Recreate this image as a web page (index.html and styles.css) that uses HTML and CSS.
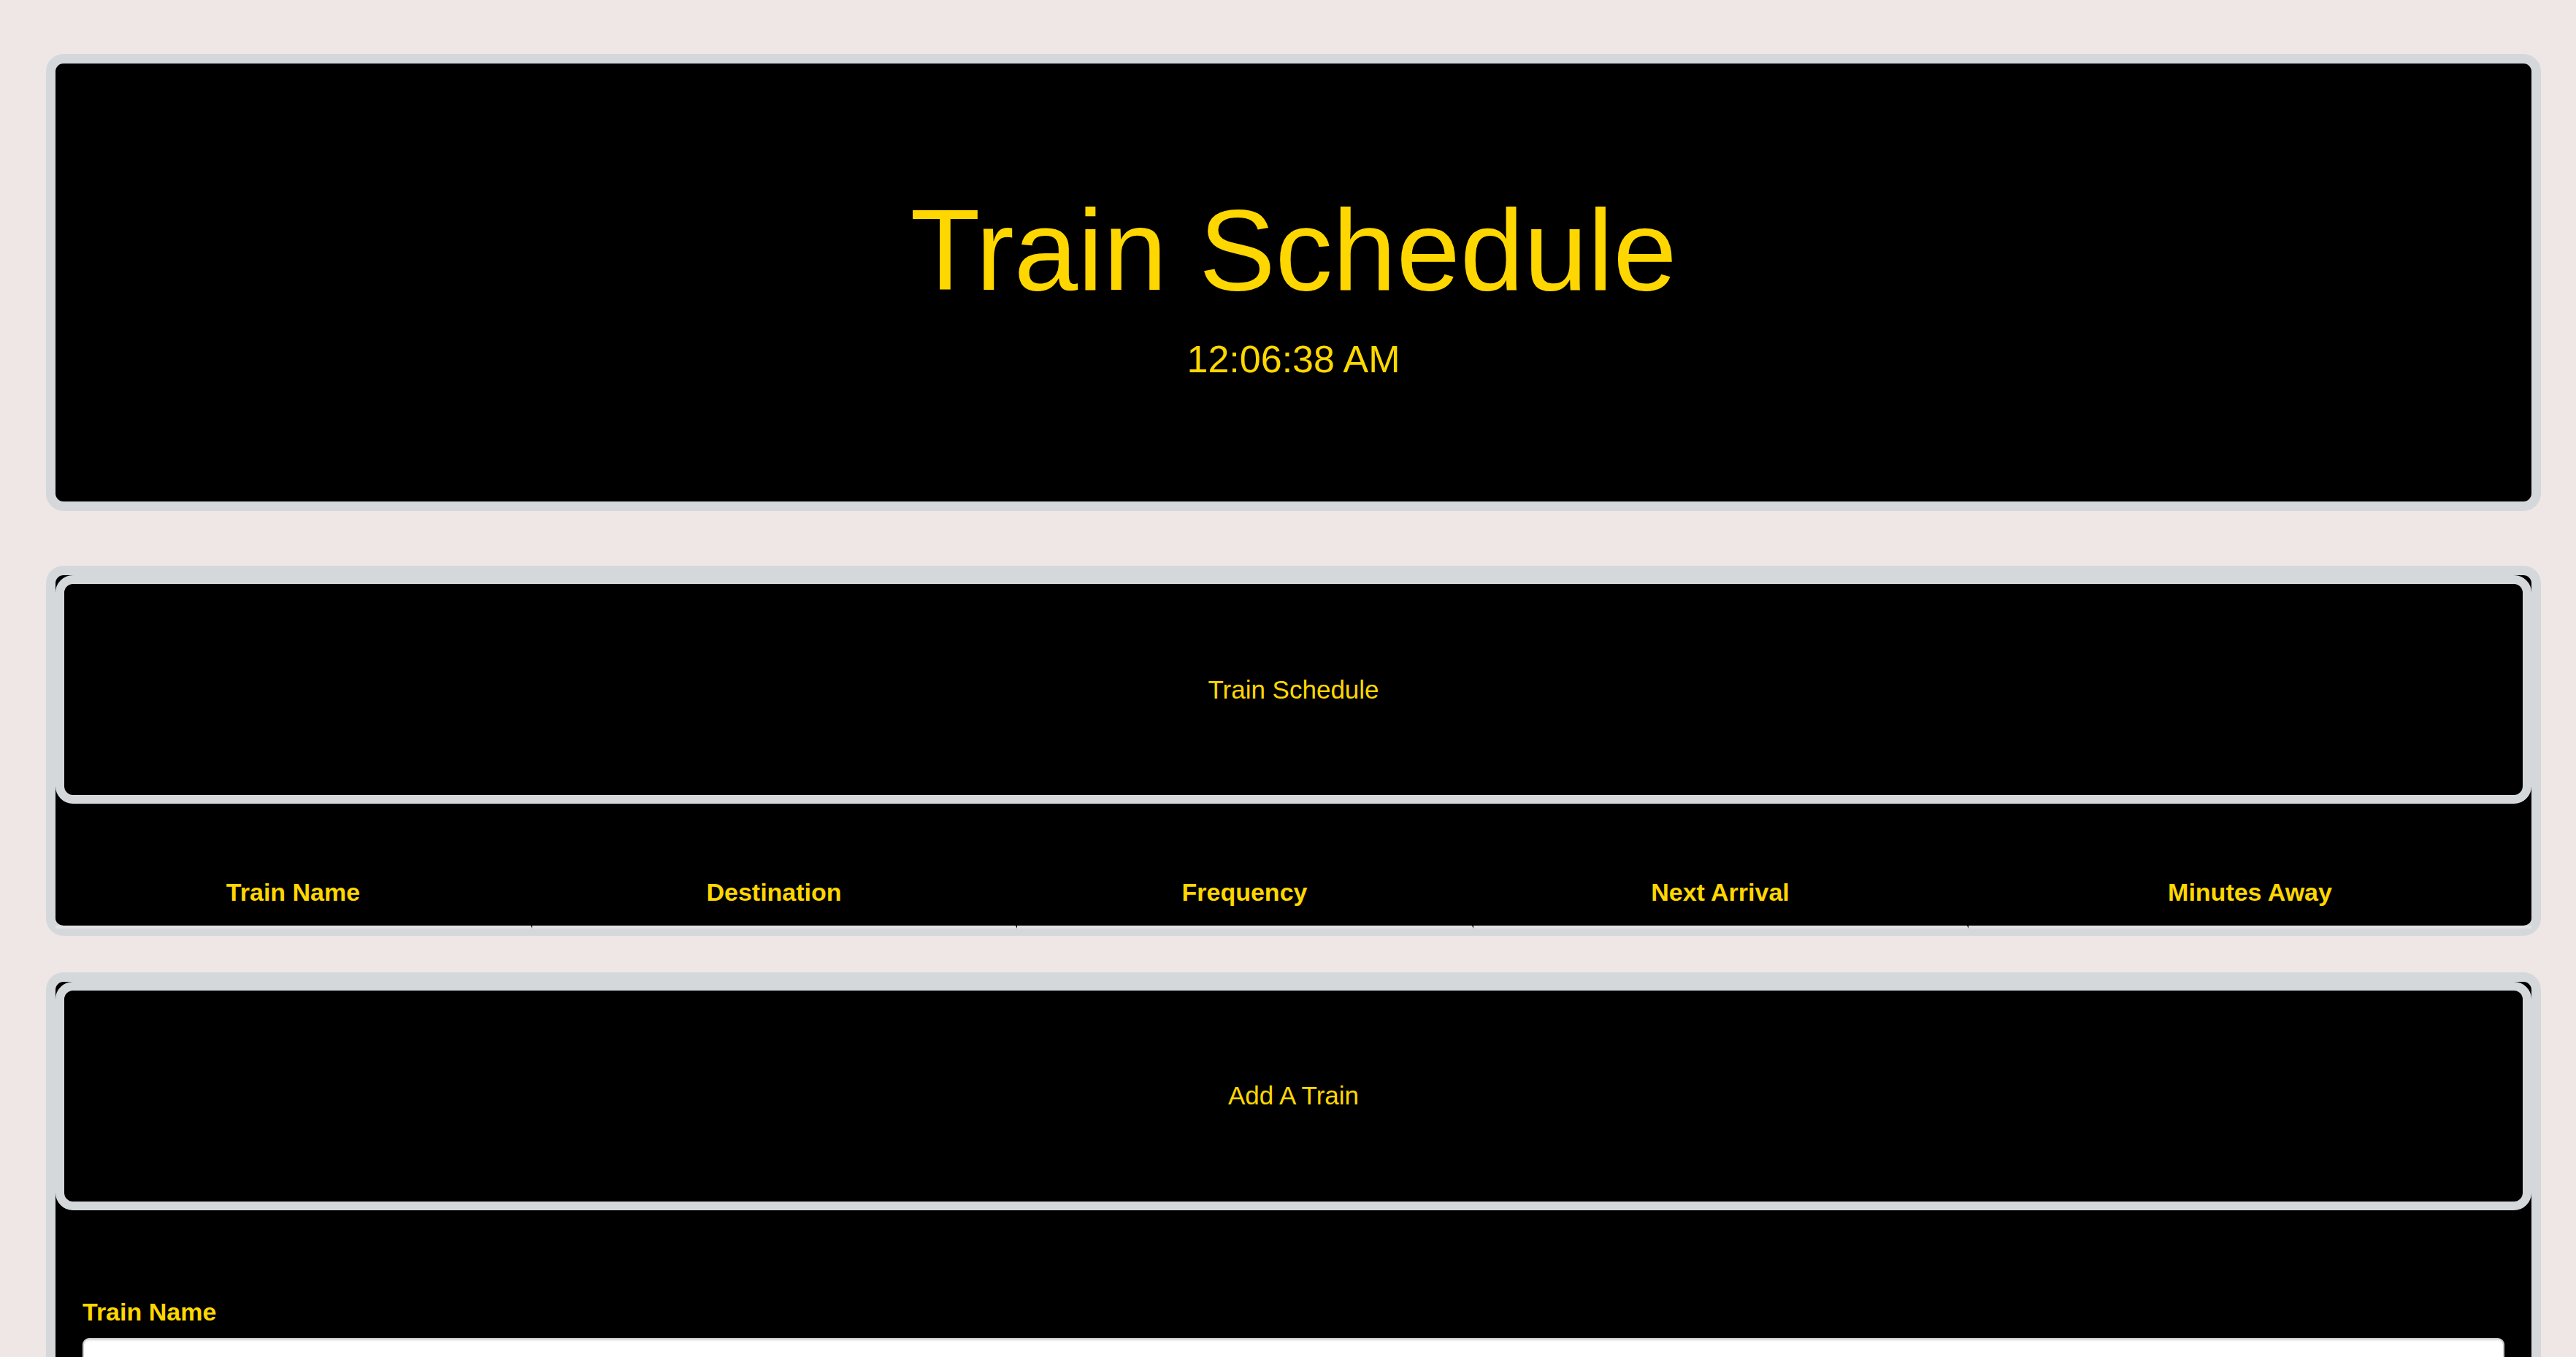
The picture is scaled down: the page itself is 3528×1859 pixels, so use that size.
FILE: index.html
```html
<!DOCTYPE html>
<html lang="en">
<head>
<meta charset="utf-8">
<title>Train Schedule</title>
<link rel="stylesheet" href="styles.css">
</head>
<body>
<div class="container">
  <header class="jumbotron">
    <h1 class="title">Train Schedule</h1>
    <div class="clock">12:06:38 AM</div>
  </header>

  <section class="panel panel-schedule">
    <div class="panel-heading">Train Schedule</div>
    <table class="schedule">
      <colgroup>
        <col class="c1"><col class="c2"><col class="c3"><col class="c4"><col class="c5">
      </colgroup>
      <thead>
        <tr>
          <th>Train Name</th>
          <th>Destination</th>
          <th>Frequency</th>
          <th>Next Arrival</th>
          <th class="last">Minutes Away</th>
        </tr>
      </thead>
      <tbody></tbody>
    </table>
  </section>

  <section class="panel panel-add">
    <div class="panel-heading">Add A Train</div>
    <form class="panel-body">
      <label class="field-label" for="train-name">Train Name</label>
      <input class="field-input" id="train-name" type="text">
    </form>
  </section>
</div>
</body>
</html>
```

FILE: styles.css
```css
html, body {
  margin: 0;
  padding: 0;
}

body {
  background: #efe6e6;
  font-family: "Liberation Sans", Arial, sans-serif;
  color: #ffd700;
}

.container {
  padding: 74px 48px 0 63px;
}

.jumbotron {
  background: #000;
  border: 13px solid #d5d8db;
  border-radius: 24px;
  padding: 170px 0 164px;
  margin-bottom: 75px;
  text-align: center;
}

.title {
  margin: 0;
  font-size: 157px;
  font-weight: normal;
  line-height: 1.1;
}

.clock {
  margin-top: 31px;
  font-size: 52px;
  line-height: 1.2;
}

.panel {
  background: #000;
  border: 13px solid #d5d8db;
  border-bottom-width: 14px;
  border-radius: 24px;
  margin-bottom: 50px;
}

.panel-heading {
  height: 289px;
  border: 12px solid #d5d8db;
  border-radius: 24px;
  display: flex;
  align-items: center;
  justify-content: center;
  font-size: 35px;
}

.schedule {
  width: 100%;
  table-layout: fixed;
  border-collapse: separate;
  border-spacing: 0;
  margin-top: 79px;
  margin-bottom: -4px;
  position: relative;
}

.c1 { width: 653px; }
.c2 { width: 664px; }
.c3 { width: 625px; }
.c4 { width: 678px; }
.c5 { width: 771px; }

.schedule th {
  font-size: 34px;
  font-weight: bold;
  line-height: 1.42857;
  padding: 18px 0 21px;
  text-align: center;
  border-bottom: 4px solid #e1e2e3;
  border-right: 2px solid #000;
}

.schedule th.last {
  border-right: 0;
}

.panel-body {
  padding: 115px 37px 60px;
}

.field-label {
  display: block;
  font-size: 34px;
  font-weight: bold;
  line-height: 1.42857;
  margin-bottom: 12px;
}

.field-input {
  display: block;
  box-sizing: border-box;
  width: 100%;
  height: 77px;
  margin: 0;
  border: 2px solid #ccc;
  border-radius: 9px;
  background: #fff;
  box-shadow: inset 0 2px 2px rgba(0, 0, 0, 0.075);
  font-size: 32px;
  font-family: "Liberation Sans", Arial, sans-serif;
}
```
